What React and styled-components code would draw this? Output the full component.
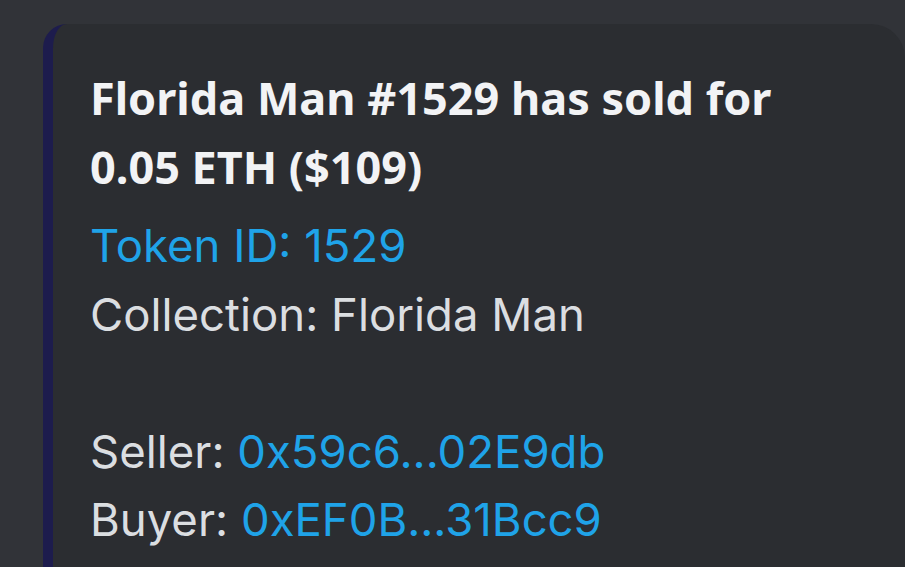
import React from 'react'
import styled, { createGlobalStyle } from 'styled-components'

const GlobalStyle = createGlobalStyle`
  html, body {
    margin: 0;
    padding: 0;
    background: #313338;
    overflow: hidden;
  }
`

const Page = styled.div`
  width: 905px;
  height: 567px;
  box-sizing: border-box;
  padding: 24px 0 0 43px;
  overflow: hidden;
`

const Embed = styled.div`
  background: #2b2d31;
  border-left: 10px solid #1d1c4d;
  border-radius: 24px 34px 0 0;
  padding: 39px 100px 40px 37px;
  min-height: 600px;
`

const Title = styled.div`
  font-family: "Noto Sans", "Open Sans", sans-serif;
  color: #f2f3f5;
  font-weight: 700;
  font-size: 45px;
  line-height: 69px;
  margin-bottom: 11px;
`

const Line = styled.div`
  font-family: Inter, "Noto Sans", sans-serif;
  color: #dbdee1;
  font-size: 45.5px;
  line-height: 68.5px;
  min-height: 68.5px;
  white-space: nowrap;
`

const Link = styled.span`
  color: #1fa3e8;
`

export default function App() {
  return (
    <>
      <GlobalStyle />
      <Page>
        <Embed>
          <Title>Florida Man #1529 has sold for 0.05 ETH ($109)</Title>
          <Line><Link>Token ID: 1529</Link></Line>
          <Line>Collection: Florida Man</Line>
          <Line />
          <Line>Seller: <Link>0x59c6...02E9db</Link></Line>
          <Line>Buyer: <Link>0xEF0B...31Bcc9</Link></Line>
        </Embed>
      </Page>
    </>
  )
}
